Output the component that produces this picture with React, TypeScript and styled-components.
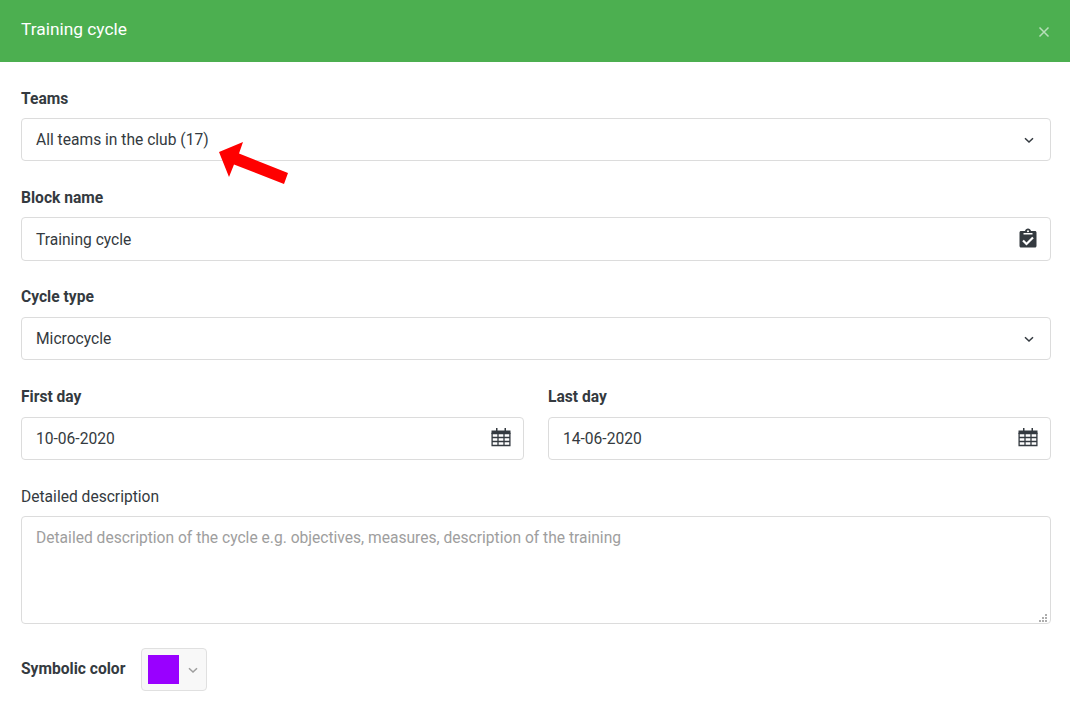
import styled, { createGlobalStyle } from 'styled-components';

const GlobalStyle = createGlobalStyle`
  html, body {
    margin: 0;
    height: 704px;
    overflow: hidden;
    background: #fff;
  }
  * {
    box-sizing: border-box;
  }
`;

const Modal = styled.div`
  position: relative;
  width: 1070px;
  font-family: Roboto, 'Noto Sans', sans-serif;
  font-size: 15.6px;
  color: #343a40;
`;

const Header = styled.header`
  height: 62px;
  background: #4caf50;
  color: #fff;
  display: flex;
  align-items: center;
  justify-content: space-between;
  padding: 0 20px 0 21px;
  font-size: 17.33px;
  line-height: 58px;

  span {
    padding-bottom: 4px;
  }
  svg {
    margin-top: 2px;
    opacity: 0.6;
  }
`;

const Form = styled.form`
  padding: 26px 19px 0 21px;
  display: flex;
  flex-direction: column;
  gap: 26px;
`;

const Group = styled.div`
  display: flex;
  flex-direction: column;
  flex: 1;
  min-width: 0;
`;

const Label = styled.label<{ $plain?: boolean; $drop?: boolean }>`
  font-size: 15.6px;
  font-weight: ${(p) => (p.$plain ? 400 : 700)};
  line-height: 20px;
  margin-top: ${(p) => (p.$drop ? 1 : 0)}px;
  margin-bottom: ${(p) => (p.$drop ? 9 : 10)}px;
`;

const Field = styled.div<{ $h?: number }>`
  height: ${(p) => p.$h ?? 43}px;
  border: 1px solid #dcdcdc;
  border-radius: 4px;
  background: #fff;
  display: flex;
  align-items: center;
  justify-content: space-between;
  padding: 0 12px 0 14px;
  color: #343a40;
`;

const FieldText = styled.span<{ $drop?: boolean }>`
  margin-top: ${(p) => (p.$drop ? 1 : 0)}px;
`;

const Row = styled.div`
  display: flex;
  gap: 24px;
  margin-top: 1px;
`;

const TextareaWrap = styled.div`
  position: relative;
  height: 108px;
`;

const Description = styled.textarea`
  display: block;
  height: 100%;
  width: 100%;
  border: 1px solid #dcdcdc;
  border-radius: 4px;
  padding: 11px 14px;
  font-family: inherit;
  font-size: 15.6px;
  line-height: 21px;
  color: #343a40;
  outline: none;
  resize: none;

  &::placeholder {
    color: #9e9e9e;
    opacity: 1;
  }
`;

// drawn resize grip: triangle of small dots in the corner
const Grip = styled.span`
  position: absolute;
  right: 4px;
  bottom: 2px;
  width: 2px;
  height: 2px;
  background: #adadad;
  box-shadow:
    -3px 0 #adadad,
    -6px 0 #adadad,
    0 -3px #adadad,
    -3px -3px #adadad,
    0 -6px #adadad;
`;

const ColorRow = styled.div`
  display: flex;
  align-items: center;
  gap: 16px;
  margin-top: -2px;
`;

const ColorLabel = styled.span`
  font-size: 15.6px;
  font-weight: 700;
  margin-bottom: 2px;
`;

const ColorPicker = styled.div`
  width: 66px;
  height: 43px;
  border: 1px solid #e0e0e0;
  border-radius: 4px;
  background: #f8f8f8;
  display: flex;
  align-items: center;
  gap: 8px;
  padding: 0 6px;
  color: #9e9e9e;
`;

const Swatch = styled.span`
  width: 31px;
  height: 29px;
  background: #9900ff;
`;

const Pointer = styled.svg`
  position: absolute;
  left: 215px;
  top: 138px;
`;

const ChevronIcon = styled.svg<{ $inset?: number }>`
  margin-right: ${(p) => p.$inset ?? 0}px;
`;

const Chevron = ({ inset }: { inset?: number }) => (
  <ChevronIcon $inset={inset} width="12" height="12" viewBox="0 0 12 12" fill="none" stroke="currentColor" strokeWidth="1.5">
    <path d="M2 4.200l4 3.800 4-3.800" />
  </ChevronIcon>
);

const ClipboardIcon = styled.svg`
  margin: 0 1px 2px 0;
`;

const ClipboardCheck = () => (
  <ClipboardIcon width="18" height="20" viewBox="0 0 18 20">
    <path
      fill="#343a40"
      fillRule="evenodd"
      d="M2 3h4c.3-1.600 1.500-2.600 3-2.600s2.700 1 3 2.600h4c.8 0 1.500.7 1.500 1.500v13.500c0 .8-.7 1.500-1.500 1.500H2c-.8 0-1.500-.7-1.500-1.500V4.500C.5 3.700 1.200 3 2 3zM9 2.200a1 1 0 1 0 0 2 1 1 0 0 0 0-2zM4.500 5v1.500h9V5z"
    />
    <path fill="none" stroke="#fff" strokeWidth="2.200" d="M4 12.500l3.500 3.500 6.500-6.500" />
  </ClipboardIcon>
);

const CalendarIcon = styled.svg`
  margin-bottom: 4px;
`;

const Calendar = () => (
  <CalendarIcon width="20" height="20" viewBox="0 0 20 20">
    <path fill="#343a40" d="M.5 3.500h19V7H.5z" />
    <path fill="#343a40" d="M5 1h1.500v4H5zM13.500 1H15v4h-1.500z" />
    <path
      fill="none"
      stroke="#343a40"
      strokeWidth="1.300"
      d="M1.100 6.500h17.800v12H1.100zM1.100 10.500h17.800M1.100 14.500h17.800M7 6.500v12M13 6.500v12"
    />
  </CalendarIcon>
);

export default function App() {
  return (
    <>
      <GlobalStyle />
      <Modal>
        <Header>
          <span>Training cycle</span>
          <svg width="12" height="12" viewBox="0 0 12 12" stroke="#fff" strokeWidth="1.500">
            <path d="M1.500 1.500l9 9M10.500 1.500l-9 9" />
          </svg>
        </Header>
        <Form>
          <Group>
            <Label $drop>Teams</Label>
            <Field>
              All teams in the club (17)
              <Chevron inset={3} />
            </Field>
          </Group>
          <Group>
            <Label $drop>Block name</Label>
            <Field $h={44}>
              <FieldText $drop>Training cycle</FieldText>
              <ClipboardCheck />
            </Field>
          </Group>
          <Group>
            <Label>Cycle type</Label>
            <Field>
              Microcycle
              <Chevron inset={3} />
            </Field>
          </Group>
          <Row>
            <Group>
              <Label>First day</Label>
              <Field>
                10-06-2020
                <Calendar />
              </Field>
            </Group>
            <Group>
              <Label>Last day</Label>
              <Field>
                14-06-2020
                <Calendar />
              </Field>
            </Group>
          </Row>
          <Group>
            <Label $plain $drop>Detailed description</Label>
            <TextareaWrap>
              <Description placeholder="Detailed description of the cycle e.g. objectives, measures, description of the training" />
              <Grip />
            </TextareaWrap>
          </Group>
          <ColorRow>
            <ColorLabel>Symbolic color</ColorLabel>
            <ColorPicker>
              <Swatch />
              <Chevron />
            </ColorPicker>
          </ColorRow>
        </Form>
        <Pointer width="76" height="48" viewBox="215 138 76 48">
          <polygon fill="#ff0000" points="219,152 243,142 239,153.500 288,173 284,184 234,164.500 229,177" />
        </Pointer>
      </Modal>
    </>
  );
}
